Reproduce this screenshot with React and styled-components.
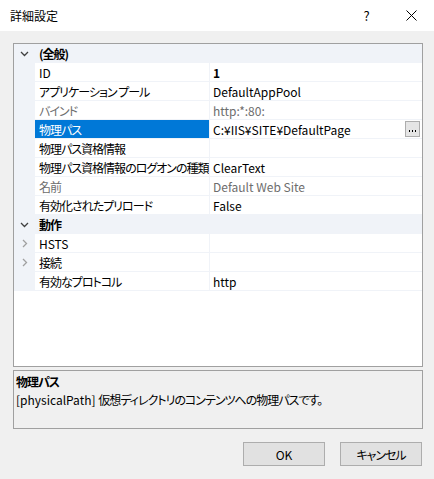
import React from 'react';
import styled, { createGlobalStyle } from 'styled-components';

const GlobalStyle = createGlobalStyle`
  html, body {
    margin: 0;
    padding: 0;
    background: #f0f0f0;
  }
  body {
    font-family: "Noto Sans CJK JP", "Noto Sans", sans-serif;
    font-size: 12px;
    font-feature-settings: "palt";
    color: #000;
  }
`;

const LINE = '#f0f3f8';

const Window = styled.div`
  width: 434px;
  height: 479px;
  display: flex;
  flex-direction: column;
  background: #f0f0f0;
  overflow: hidden;
`;

const TitleBar = styled.div`
  height: 31px;
  flex-shrink: 0;
  background: #fff;
  display: flex;
  align-items: center;
  padding-left: 10px;
`;

const Title = styled.div`
  font-size: 12px;
  flex: 1;
`;

const CaptionButton = styled.div`
  width: 45px;
  height: 31px;
  display: flex;
  align-items: center;
  justify-content: center;
  font-size: 13px;
  color: #000;
`;

const Body = styled.div`
  flex: 1;
  display: flex;
  flex-direction: column;
  padding: 12px 11px 0 13px;
  border-left: 1px solid #8a8a8a;
  margin-left: -1px;
`;

const Grid = styled.div`
  height: 322px;
  border: 1px solid #a0a0a0;
  background: #fff;
  display: flex;
  flex-direction: column;
`;

const Row = styled.div`
  height: 18px;
  border-bottom: 1px solid ${LINE};
  display: flex;
  align-items: stretch;
  background: ${p => (p.$category ? LINE : '#fff')};
`;

const Gutter = styled.div`
  width: 21px;
  flex-shrink: 0;
  background: ${LINE};
  display: flex;
  align-items: center;
  justify-content: center;
`;

const Label = styled.div`
  width: 170px;
  flex-shrink: 0;
  padding-left: 4px;
  display: flex;
  align-items: center;
  white-space: nowrap;
  overflow: hidden;
  letter-spacing: ${p => (p.$latin ? '0' : '-1px')};
  font-weight: ${p => (p.$category ? 700 : 400)};
  color: ${p => (p.$selected ? '#fff' : p.$disabled ? '#6d6d6d' : '#000')};
  background: ${p => (p.$selected ? '#0078d7' : 'transparent')};
  border-right: ${p => (p.$category ? 'none' : `1px solid ${LINE}`)};
`;

const Value = styled.div`
  flex: 1;
  padding-left: 3px;
  padding-right: 2px;
  display: flex;
  align-items: center;
  white-space: nowrap;
  overflow: hidden;
  font-weight: ${p => (p.$bold ? 700 : 400)};
  color: ${p => (p.$disabled ? '#6d6d6d' : '#000')};
`;

const ValueText = styled.span`
  flex: 1;
`;

const EllipsisButton = styled.div`
  width: 15px;
  height: 16px;
  box-sizing: border-box;
  border: 1px solid #adadad;
  background: #e5e5e5;
  display: flex;
  align-items: flex-end;
  justify-content: center;
  gap: 2px;
  padding-bottom: 4px;
`;

const Dot = styled.span`
  width: 1px;
  height: 2px;
  background: #000;
`;

const Description = styled.div`
  margin-top: 3px;
  height: 55px;
  border: 1px solid #a0a0a0;
  padding: 2px 0 0 2px;
  display: flex;
  flex-direction: column;
  gap: 1px;
`;

const DescTitle = styled.div`
  font-weight: 700;
  line-height: 17px;
  letter-spacing: -1px;
`;

const DescText = styled.div`
  line-height: 17px;
  letter-spacing: -1px;
`;

const Code = styled.span`
  letter-spacing: 0;
`;

const Footer = styled.div`
  display: flex;
  justify-content: flex-end;
  gap: 15px;
  margin-top: 13px;
  padding-right: 1px;
`;

const Button = styled.div`
  width: 82px;
  height: 24px;
  box-sizing: border-box;
  border: 1px solid #adadad;
  background: #e1e1e1;
  display: flex;
  align-items: center;
  justify-content: center;
  font-size: 12px;
  letter-spacing: ${p => (p.$tight ? '-1px' : '0')};
`;

const Chevron = ({ open }) => (
  <svg width="9" height="9" viewBox="0 0 9 9">
    {open ? (
      <path d="M1 3 L4.5 6.5 L8 3" fill="none" stroke="#404040" strokeWidth="1.3" />
    ) : (
      <path d="M3 1 L6.5 4.5 L3 8" fill="none" stroke="#a0a0a0" strokeWidth="1.3" />
    )}
  </svg>
);

const rows = [
  { category: true, label: '(全般)', open: true },
  { label: 'ID', value: '1', bold: true, latin: true },
  { label: 'アプリケーション プール', value: 'DefaultAppPool' },
  { label: 'バインド', value: 'http:*:80:', disabled: true },
  { label: '物理パス', value: 'C:¥IIS¥SITE¥DefaultPage', selected: true, button: true },
  { label: '物理パス資格情報', value: '' },
  { label: '物理パス資格情報のログオンの種類', value: 'ClearText' },
  { label: '名前', value: 'Default Web Site', disabled: true },
  { label: '有効化されたプリロード', value: 'False' },
  { category: true, label: '動作', open: true },
  { label: 'HSTS', value: '', expandable: true, latin: true },
  { label: '接続', value: '', expandable: true },
  { label: '有効なプロトコル', value: 'http' },
];

export default function App() {
  return (
    <>
      <GlobalStyle />
      <Window>
        <TitleBar>
          <Title>詳細設定</Title>
          <CaptionButton>?</CaptionButton>
          <CaptionButton>
            <svg width="11" height="11" viewBox="0 0 11 11">
              <path d="M0.5 0.5 L10.5 10.5 M10.5 0.5 L0.5 10.5" stroke="#000" strokeWidth="1" />
            </svg>
          </CaptionButton>
        </TitleBar>
        <Body>
          <Grid>
            {rows.map((r, i) => (
              <Row key={i} $category={r.category}>
                <Gutter>
                  {r.category && <Chevron open />}
                  {r.expandable && <Chevron />}
                </Gutter>
                <Label
                  $category={r.category}
                  $selected={r.selected}
                  $disabled={r.disabled}
                  $latin={r.latin}
                >
                  {r.label}
                </Label>
                {!r.category && (
                  <Value $bold={r.bold} $disabled={r.disabled}>
                    <ValueText>{r.value}</ValueText>
                    {r.button && (
                      <EllipsisButton>
                        <Dot />
                        <Dot />
                        <Dot />
                      </EllipsisButton>
                    )}
                  </Value>
                )}
              </Row>
            ))}
          </Grid>
          <Description>
            <DescTitle>物理パス</DescTitle>
            <DescText>
              <Code>[physicalPath] </Code>仮想ディレクトリのコンテンツへの物理パスです。
            </DescText>
          </Description>
          <Footer>
            <Button>OK</Button>
            <Button $tight>キャンセル</Button>
          </Footer>
        </Body>
      </Window>
    </>
  );
}
